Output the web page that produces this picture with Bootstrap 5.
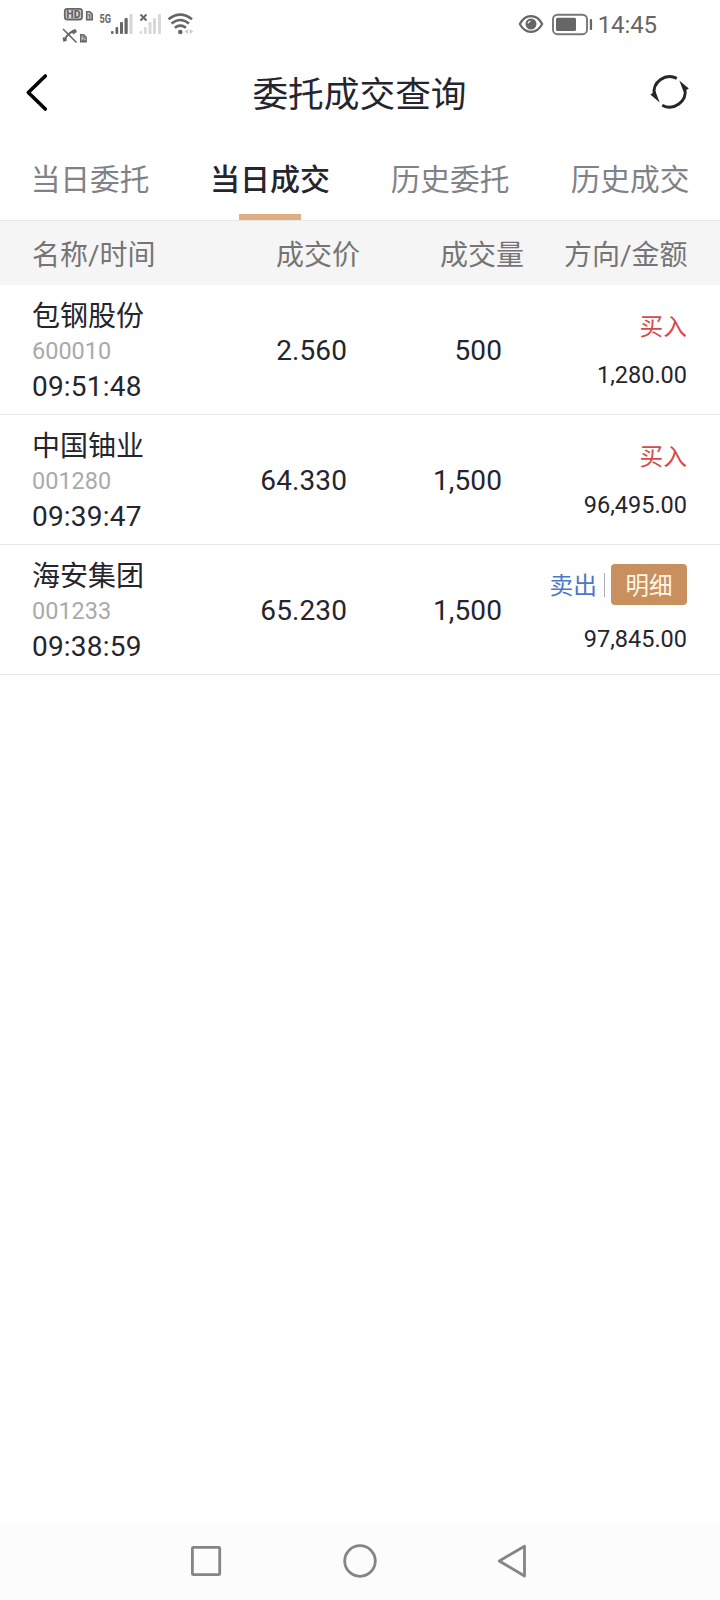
<!DOCTYPE html>
<html lang="zh-CN">
<head>
<meta charset="utf-8">
<meta name="viewport" content="width=device-width, initial-scale=1">
<title>委托成交查询</title>
<link rel="stylesheet" href="https://cdn.jsdelivr.net/npm/bootstrap@5.3.0/dist/css/bootstrap.min.css">
<style>
body{font-family:Roboto,"Noto Sans CJK SC",sans-serif;color:#25252d;background:#fff;font-size:28px}
.screen{height:1600px}
.status-bar{height:50px;color:#666;padding:0 63px 0 62px}
.clock{font-size:24px;line-height:50px;letter-spacing:-.1px}
.title-bar{height:88px;padding:0 30px 4px 24px}
.title-bar h1{font-size:35.7px;line-height:84px;padding:6px 0 0 15px}
.tabs-bar{height:83px;border-bottom:1px solid #e8e8e8}
.tabs-bar .nav-link{font-size:29.7px;line-height:84px;color:#818286;height:82px}
.tabs-bar .nav-link.active{color:#25252d;font-weight:500;font-size:30px}
.tabs-bar .nav-link.active::after{content:"";position:absolute;left:50%;bottom:0;width:62px;height:6px;margin-left:-31px;background:#e0ae82}
.head-row{height:64px;line-height:69px;background:#f5f5f5;color:#757575;padding:0 32px;display:grid;grid-template-columns:164px 164px 164px 163.5px}
.deal{height:130px;padding:0 32px;border-bottom:1px solid #e8e8e8;display:grid;grid-template-columns:164px 151px 155px 185px}
.deal-name{line-height:36px;padding-top:14px}
.deal-code{font-size:23.5px;line-height:32px;color:#aaa}
.deal-time{line-height:40px;letter-spacing:.2px}
.deal-num{line-height:132px;letter-spacing:.1px}
.side{font-size:23.7px;line-height:36px;padding-top:24px}
.amount{font-size:23.5px;line-height:30px;padding-top:15px}
.buy{color:#d64a4a}
.sell{color:#4a78c8}
.has-detail .side{padding-top:19px;height:60px}
.has-detail .sell-label{padding-top:2px}
.has-detail .amount{padding-top:19px}
.split{width:1px;height:24px;background:#a9abb3;margin:0 6px 0 7px}
.btn-detail{width:76px;height:41px;font-size:23.5px;line-height:45px;background:#c7905e;color:#fff6e8;border-radius:4px}
.sys-nav{height:78px;background:#fcfcfc}
</style>
</head>
<body>
<div class="screen d-flex flex-column overflow-hidden">
  <div class="status-bar d-flex justify-content-between flex-shrink-0">
    <svg width="134" height="50" viewBox="62 0 134 50" fill="#666" font-family="Roboto,sans-serif" font-weight="700">
      <rect x="64.800" y="8.800" width="17.200" height="10.700" rx="2.500" fill="#ddd" stroke="#666" stroke-width="1.800"/>
      <text x="66.300" y="18" font-size="10.800" font-weight="900" textLength="14.300" lengthAdjust="spacingAndGlyphs">HD</text>
      <path d="M86.700 11.700h3l2.500 2.500v5.500h-5.500z" fill="#ccc" stroke="#666" stroke-width="1.600"/><text x="87.300" y="19" font-size="7.500">1</text>
      <path d="M80.700 34.700h3l2.500 2.500v4.500h-5.500z" fill="#ccc" stroke="#666" stroke-width="1.400"/><text x="81.500" y="41.200" font-size="7">2</text>
      <path d="M63 29L76.500 42.500" stroke="#666" stroke-width="1.600"/>
      <path d="M75 30.500Q67 33 64.500 40.500" stroke="#666" stroke-width="2" fill="none"/>
      <path d="M71.500 30.500l4-1.500 1.500 3-4 2.500zM62.500 37.500l3.500 0 1 3-3.500 1.500z"/>
      <text x="99.500" y="22.800" font-size="12" textLength="11.500" lengthAdjust="spacingAndGlyphs">5G</text>
      <g><rect x="111" y="31" width="2.500" height="3" rx="1"/><rect x="115.500" y="27" width="2.700" height="7" rx="1"/><rect x="120" y="22" width="3" height="12" rx="1"/><rect x="124.500" y="18" width="3.200" height="16" rx="1"/><rect x="129.500" y="14" width="3" height="20" rx="1" fill="#d6d6d6"/></g>
      <g fill="#d8d8d8"><rect x="139.500" y="31" width="2.500" height="3" rx="1"/><rect x="144" y="27" width="2.700" height="7" rx="1"/><rect x="148.500" y="22" width="3" height="12" rx="1"/><rect x="153" y="18" width="3" height="16" rx="1"/><rect x="158" y="14" width="3" height="20" rx="1"/></g>
      <path d="M140.500 14.500l6 6m0-6l-6 6" stroke="#666" stroke-width="2"/>
      <g fill="none" stroke="#666" stroke-width="2.600"><path d="M168.500 19.300Q180.300 10 192 19.300M171.500 23.500Q180.300 16.500 189 23.500M174.800 27.700Q180.300 23.500 186 27.700"/></g>
      <circle cx="180.300" cy="32" r="2.300"/>
      <path d="M188 29v5l-3.500-2.500zM189.700 29v5l3.500-2.500z" fill="#ccc"/>
    </svg>
    <div class="d-flex">
      <svg class="me-1" width="78" height="50" viewBox="516.500 0 78 50" fill="none" stroke="#666">
        <path d="M520.300 24C526 13.500 537 13.500 542.700 24C537 34.500 526 34.500 520.300 24Z" stroke-width="2.200" stroke-linejoin="round"/>
        <circle cx="531.500" cy="24" r="5.500" fill="#666" stroke="none"/><path d="M528.500 23.500q.3-2 2.500-2.300" stroke="#fff" stroke-width="1.200"/>
        <rect x="553.500" y="14.700" width="34" height="19.500" rx="4.500" stroke-width="1.900" stroke="#777"/>
        <rect x="556.500" y="17.800" width="20" height="13.300" rx="1.500" fill="#666" stroke="none"/>
        <rect x="590.300" y="19" width="2.300" height="11" rx="1" fill="#666" stroke="none"/>
      </svg>
      <span class="clock">14:45</span>
    </div>
  </div>

  <header class="title-bar d-flex align-items-center justify-content-between flex-shrink-0">
    <svg width="30" height="44" viewBox="24 70 30 44"><path d="M45.300 76L28.300 92.500L45.300 109" fill="none" stroke="#000" stroke-width="3.600" stroke-linecap="round" stroke-linejoin="round"/></svg>
    <h1 class="mb-0 fw-normal">委托成交查询</h1>
    <svg width="40" height="44" viewBox="650 70 40 44" fill="none" stroke="#25252d" stroke-width="2.900">
      <path d="M676.800 78.400A15.600 15.600 0 0 0 654.200 94.500M662.200 105.200A15.600 15.600 0 0 0 684.900 88.500"/>
      <path d="M679.300 80.500L688.800 88.500L683.500 91.500ZM659.700 102.500L650.300 94.500L655.500 91.500Z" fill="#25252d" stroke="none"/>
    </svg>
  </header>

  <nav class="tabs-bar nav nav-fill flex-nowrap flex-shrink-0">
    <a class="nav-link col-3 p-0" href="#">当日委托</a>
    <a class="nav-link col-3 p-0 active position-relative" href="#">当日成交</a>
    <a class="nav-link col-3 p-0" href="#">历史委托</a>
    <a class="nav-link col-3 p-0" href="#">历史成交</a>
  </nav>

  <div class="head-row flex-shrink-0 text-nowrap">
    <span>名称/时间</span><span class="text-end">成交价</span><span class="text-end">成交量</span><span class="text-end">方向/金额</span>
  </div>

  <main class="flex-grow-1">
    <div class="deal">
      <div><div class="deal-name">包钢股份</div><div class="deal-code">600010</div><div class="deal-time">09:51:48</div></div>
      <div class="deal-num text-end">2.560</div>
      <div class="deal-num text-end">500</div>
      <div class="text-end"><div class="side buy">买入</div><div class="amount">1,280.00</div></div>
    </div>
    <div class="deal">
      <div><div class="deal-name">中国铀业</div><div class="deal-code">001280</div><div class="deal-time">09:39:47</div></div>
      <div class="deal-num text-end">64.330</div>
      <div class="deal-num text-end">1,500</div>
      <div class="text-end"><div class="side buy">买入</div><div class="amount">96,495.00</div></div>
    </div>
    <div class="deal has-detail">
      <div><div class="deal-name">海安集团</div><div class="deal-code">001233</div><div class="deal-time">09:38:59</div></div>
      <div class="deal-num text-end">65.230</div>
      <div class="deal-num text-end">1,500</div>
      <div class="text-end">
        <div class="side sell d-flex align-items-center justify-content-end"><span class="sell-label">卖出</span><span class="split"></span><button type="button" class="btn btn-detail border-0 p-0">明细</button></div>
        <div class="amount">97,845.00</div>
      </div>
    </div>
  </main>

  <footer class="sys-nav d-flex justify-content-center align-items-center flex-shrink-0">
    <svg width="340" height="40" viewBox="190 1541 340 40" fill="none" stroke="#858585" stroke-width="2.800" stroke-linejoin="round">
      <rect x="192.400" y="1547.400" width="27.300" height="27.300" rx="1"/>
      <circle cx="360" cy="1561" r="15.300"/>
      <path d="M524.500 1546.200V1576L499.300 1561Z"/>
    </svg>
  </footer>
</div>
<script src="https://cdn.jsdelivr.net/npm/bootstrap@5.3.0/dist/js/bootstrap.bundle.min.js"></script>
</body>
</html>
